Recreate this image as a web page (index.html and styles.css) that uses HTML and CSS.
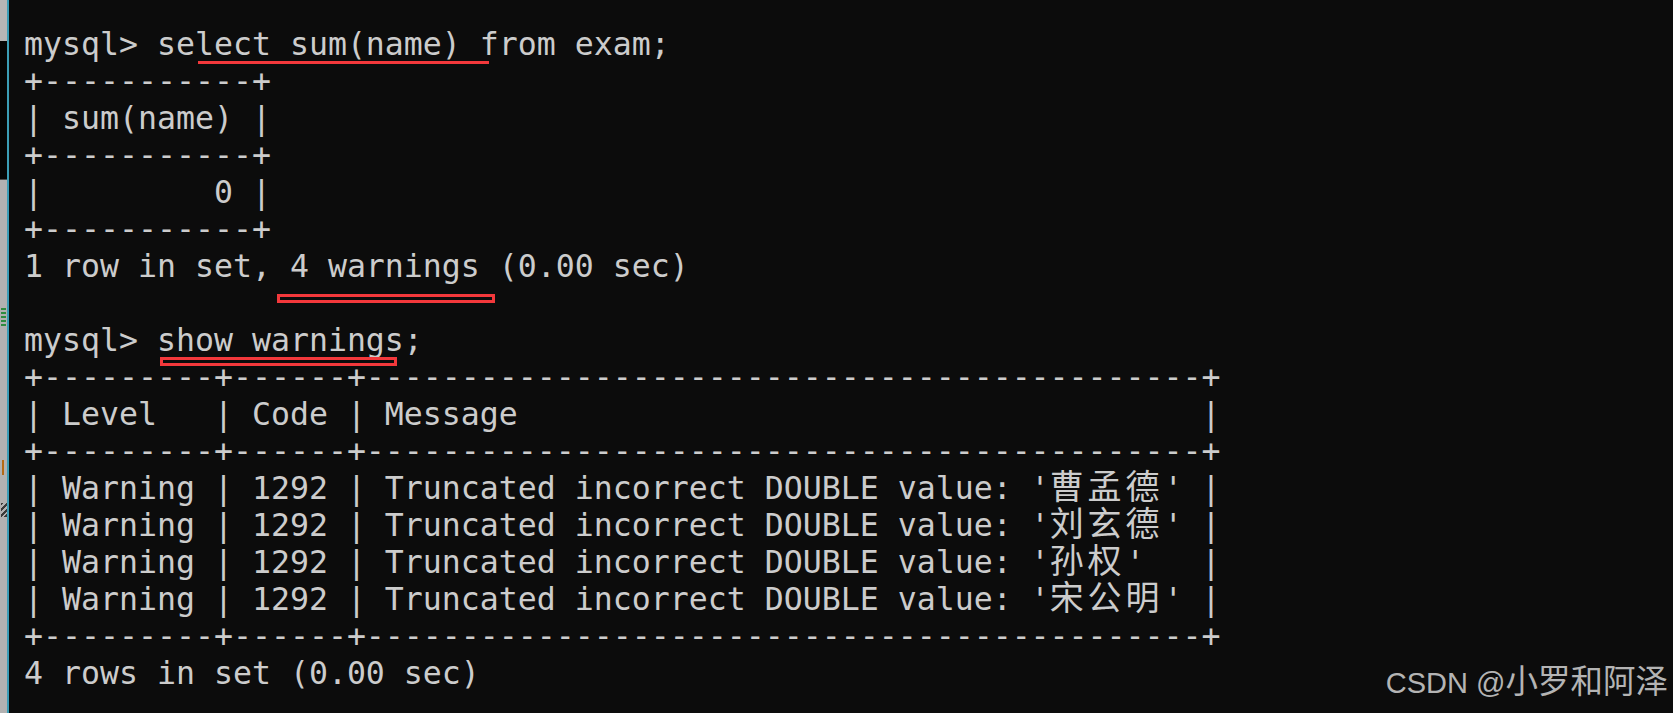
FILE: index.html
```html
<!DOCTYPE html>
<html lang="zh-CN">
<head>
<meta charset="utf-8">
<title>mysql show warnings</title>
<link rel="stylesheet" href="styles.css">
</head>
<body>
<div class="screen">
  <aside class="side">
    <div class="side-top"></div>
    <div class="side-band"></div>
    <div class="side-rest">
      <span class="frag frag-green"></span>
      <span class="frag frag-orange"></span>
      <span class="frag frag-dark"></span>
    </div>
  </aside>
  <main class="term">
<pre class="out">mysql&gt; select sum(name) from exam;
+-----------+
| sum(name) |
+-----------+
|         0 |
+-----------+
1 row in set, 4 warnings (0.00 sec)

mysql&gt; show warnings;
+---------+------+--------------------------------------------+
| Level   | Code | Message                                    |
+---------+------+--------------------------------------------+
| Warning | 1292 | Truncated incorrect DOUBLE value: '<span class="cjk">曹孟德</span>' |
| Warning | 1292 | Truncated incorrect DOUBLE value: '<span class="cjk">刘玄德</span>' |
| Warning | 1292 | Truncated incorrect DOUBLE value: '<span class="cjk">孙权</span>'   |
| Warning | 1292 | Truncated incorrect DOUBLE value: '<span class="cjk">宋公明</span>' |
+---------+------+--------------------------------------------+
4 rows in set (0.00 sec)</pre>
    <span class="mark mark-line"></span>
    <span class="mark mark-box mark-warn"></span>
    <span class="mark mark-box mark-show"></span>
  </main>
  <div class="watermark">CSDN @<span class="wm-cjk">小罗和阿泽</span></div>
</div>
</body>
</html>
```
FILE: styles.css
```css
html, body {
  margin: 0;
  padding: 0;
  background: #0c0c0c;
}

.screen {
  position: relative;
  display: flex;
  width: 1673px;
  height: 713px;
  overflow: hidden;
  background: #0c0c0c;
}

.side {
  width: 7px;
  flex: none;
  display: flex;
  flex-direction: column;
  border-right: 2px solid #3b9db6;
}

.side-top {
  height: 41px;
  background: #b6b6b6;
}

.side-band {
  height: 138px;
  background: #050505;
  border-bottom: 1px solid #4a4a4a;
}

.side-rest {
  flex: 1;
  background: #b2b2b2;
  display: flex;
  flex-direction: column;
}

.frag {
  display: block;
}

.frag-green {
  margin-top: 128px;
  margin-left: 1px;
  width: 5px;
  height: 20px;
  background: repeating-linear-gradient(180deg, #2f8c3f 0 2px, #b2b2b2 2px 4px);
}

.frag-orange {
  margin-top: 132px;
  margin-left: 2px;
  width: 2px;
  height: 15px;
  background: #b46a14;
}

.frag-dark {
  margin-top: 28px;
  margin-left: 1px;
  width: 6px;
  height: 14px;
  background: repeating-linear-gradient(135deg, #3a3a3a 0 2px, #b2b2b2 2px 4px);
}

.term {
  position: relative;
  flex: 1;
  padding: 26px 0 0 15px;
}

.out {
  margin: 0;
  font-family: "DejaVu Sans Mono", monospace;
  font-size: 31.56px;
  line-height: 37px;
  color: #cccccc;
  white-space: pre;
}

.cjk {
  font-family: "Noto Sans CJK SC", sans-serif;
  font-size: 34px;
  line-height: 0;
  letter-spacing: 4px;
}

.mark {
  position: absolute;
  display: block;
  box-sizing: border-box;
}

.mark-line {
  left: 189px;
  top: 61px;
  width: 291px;
  height: 3px;
  background: #f3383b;
}

.mark-box {
  height: 9px;
  border: 3px solid #f3383b;
}

.mark-warn {
  left: 268px;
  top: 294px;
  width: 218px;
}

.mark-show {
  left: 151px;
  top: 357px;
  width: 237px;
}

.watermark {
  position: absolute;
  right: 5px;
  top: 667px;
  font-family: "Liberation Sans", Arial, sans-serif;
  font-size: 29px;
  line-height: 32px;
  color: #b4b4b4;
  white-space: nowrap;
}

.wm-cjk {
  font-family: "Noto Sans CJK SC", sans-serif;
  font-size: 32.5px;
  line-height: 0;
}
```
